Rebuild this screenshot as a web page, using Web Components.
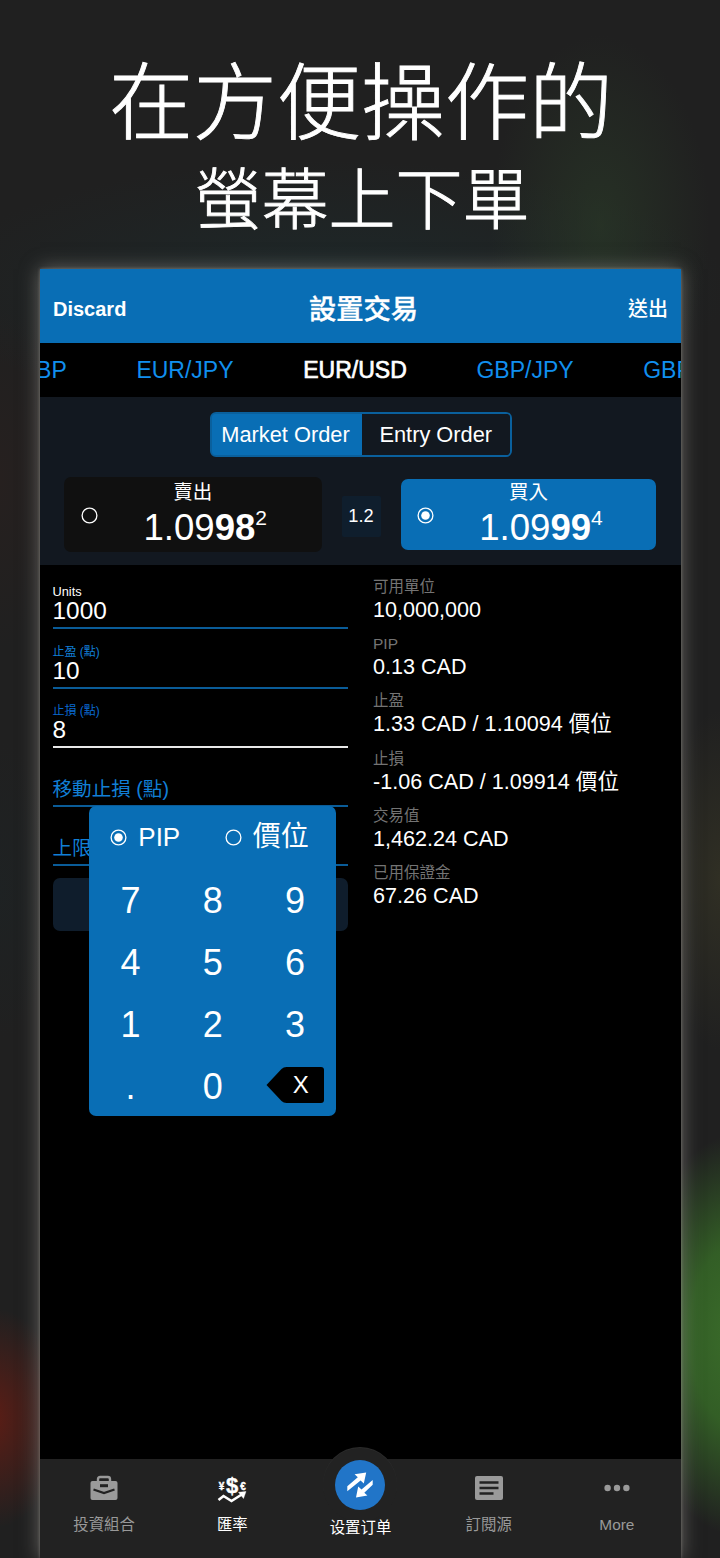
<!DOCTYPE html>
<html lang="zh-Hant">
<head>
<meta charset="utf-8">
<title>設置交易</title>
<style>
    html, body {
        margin: 0;
        height: 1558px;
        overflow: hidden;
    }
    body {
        font-family: "Liberation Sans", "Noto Sans CJK TC", sans-serif;
        color: #fff;
        background:
            radial-gradient(ellipse 100px 200px at 735px 1335px, #3a6c2a 0, #335e26 45%, transparent 100%),
            radial-gradient(ellipse 75px 110px at -8px 1418px, #5c1d15 0, transparent 100%),
            radial-gradient(ellipse 60px 170px at 0 480px, rgba(60, 32, 28, .22) 0, transparent 100%),
            radial-gradient(ellipse 60px 150px at 0 890px, rgba(20, 45, 52, .15) 0, transparent 100%),
            radial-gradient(ellipse 60px 170px at 720px 880px, rgba(64, 62, 40, .5) 0, transparent 100%),
            radial-gradient(ellipse 110px 190px at 600px 225px, rgba(42, 58, 40, .65) 0, transparent 100%),
            radial-gradient(ellipse 400px 130px at 330px 290px, rgba(28, 46, 48, .6) 0, transparent 100%),
            #202020;
    }
</style>
</head>
<body>
<promo-page>
    <promo-title slot="title" style="--size: 84px; --line: 100px; --shift: 2px">在方便操作的</promo-title>
    <promo-title slot="title" style="--size: 67px; --line: 96px; --shift: 4px">螢幕上下單</promo-title>

    <app-header>
        <span slot="left">Discard</span>
        設置交易
        <span slot="right">送出</span>
    </app-header>
    <pair-tabs>
        <span>EUR/GBP</span>
        <span>EUR/JPY</span>
        <span class="on">EUR/USD</span>
        <span>GBP/JPY</span>
        <span>GBP/USD</span>
    </pair-tabs>
    <order-panel>
        <order-switch slot="switch">
            <span class="on">Market Order</span>
            <span>Entry Order</span>
        </order-switch>
        <quote-button label="賣出" price="1.09" pips="98" point="2"></quote-button>
        <spread-box>1.2</spread-box>
        <quote-button label="買入" price="1.09" pips="99" point="4" selected></quote-button>
    </order-panel>
    <order-body>
        <order-field slot="fields" label="Units" value="1000" style="--label: #fff; --label-size: 12.8px"></order-field>
        <order-field slot="fields" label="止盈 (點)" value="10"></order-field>
        <order-field slot="fields" label="止損 (點)" value="8" style="--line: #e8e8e8; --label: #0a6ad0"></order-field>
        <order-field slot="fields" label="移動止損 (點)"></order-field>
        <order-field slot="fields" label="上限"></order-field>
        <num-pad slot="pad"></num-pad>
        <info-item label="可用單位">10,000,000</info-item>
        <info-item label="PIP">0.13 CAD</info-item>
        <info-item label="止盈">1.33 CAD / 1.10094 價位</info-item>
        <info-item label="止損">-1.06 CAD / 1.09914 價位</info-item>
        <info-item label="交易值">1,462.24 CAD</info-item>
        <info-item label="已用保證金">67.26 CAD</info-item>
    </order-body>
    <nav-bar>
        <nav-item icon="case">投資組合</nav-item>
        <nav-item icon="rates" class="on">匯率</nav-item>
        <nav-item icon="trade" class="main" lang="zh-Hans">设置订单</nav-item>
        <nav-item icon="feed">訂閱源</nav-item>
        <nav-item icon="more">More</nav-item>
    </nav-bar>
</promo-page>

<script>
    // Base class: every element only supplies its own markup
    class BaseElement extends HTMLElement {
        constructor() {
            super();
            this.attachShadow({ mode: 'open' });
        }

        connectedCallback() {
            const template = document.createElement('template');
            template.innerHTML = this.template();
            this.shadowRoot.replaceChildren(template.content.cloneNode(true));
        }

        attr(name) {
            return this.getAttribute(name) || '';
        }
    }

    class PromoPage extends BaseElement {
        template() {
            return `
                <style>
                    :host {
                        display: flex;
                        flex-direction: column;
                        height: 1558px;
                    }
                    header {
                        height: 222px;
                        padding-top: 47px;
                    }
                    main {
                        flex: 1;
                        display: flex;
                        flex-direction: column;
                        margin: 0 39px 0 40px;
                        background: #000;
                        box-shadow: 0 0 3px rgba(170, 165, 160, .5), 0 0 18px rgba(170, 165, 160, .55);
                    }
                </style>
                <header><slot name="title"></slot></header>
                <main><slot></slot></main>
            `;
        }
    }

    class PromoTitle extends BaseElement {
        template() {
            return `
                <style>
                    :host {
                        display: block;
                        padding-left: var(--shift, 0);
                        text-align: center;
                        font: 300 var(--size)/var(--line) "Noto Sans CJK TC", sans-serif;
                        -webkit-text-stroke: .9px #fff;
                    }
                </style>
                <slot></slot>
            `;
        }
    }

    class AppHeader extends BaseElement {
        template() {
            return `
                <style>
                    :host {
                        display: grid;
                        grid-template-columns: 1fr auto 1fr;
                        align-items: center;
                        height: 73.5px;
                        padding: 7px 13px 0;
                        box-sizing: border-box;
                        background: #096eb5;
                        font-weight: bold;
                    }
                    .title {
                        font-size: 27.3px;
                        font-weight: 500;
                        line-height: 40px;
                        padding: 2px 0 0 6px;
                        -webkit-text-stroke: .4px #fff;
                    }
                    .side {
                        font-size: 20px;
                        line-height: 40px;
                    }
                    .right {
                        text-align: right;
                        font-weight: 500;
                    }
                </style>
                <div class="side"><slot name="left"></slot></div>
                <div class="title"><slot></slot></div>
                <div class="side right"><slot name="right"></slot></div>
            `;
        }
    }

    class PairTabs extends BaseElement {
        template() {
            return `
                <style>
                    :host {
                        display: flex;
                        justify-content: center;
                        height: 54px;
                        padding-right: 11px;
                        overflow: hidden;
                        font-size: 23px;
                        line-height: 54px;
                        color: #118fee;
                    }
                    ::slotted(span) {
                        flex: 0 0 170px;
                        text-align: center;
                    }
                    ::slotted(.on) {
                        color: #fff;
                        -webkit-text-stroke: .7px #fff;
                    }
                </style>
                <slot></slot>
            `;
        }
    }

    class OrderPanel extends BaseElement {
        template() {
            return `
                <style>
                    :host {
                        display: block;
                        height: 168px;
                        padding-top: 15.5px;
                        box-sizing: border-box;
                        background: #121820;
                    }
                    .quotes {
                        display: flex;
                        align-items: center;
                        justify-content: space-between;
                        height: 75px;
                        margin-top: 20px;
                        padding: 0 25px 0 23.5px;
                    }
                </style>
                <slot name="switch"></slot>
                <div class="quotes"><slot></slot></div>
            `;
        }
    }

    class OrderSwitch extends BaseElement {
        template() {
            return `
                <style>
                    :host {
                        display: flex;
                        width: 301.5px;
                        height: 45px;
                        margin-left: 170px;
                        box-sizing: border-box;
                        border: 2px solid #0a609d;
                        border-radius: 6px;
                        overflow: hidden;
                        background: linear-gradient(90deg, #096eb5 50%, #121820 50%);
                        font-size: 21.8px;
                        line-height: 42px;
                        text-align: center;
                    }
                    ::slotted(span) {
                        flex: 1;
                        background: #121820;
                    }
                    ::slotted(.on) {
                        background: #096eb5;
                        flex: 0 0 150px;
                        text-indent: -3px;
                    }
                </style>
                <slot></slot>
            `;
        }
    }

    class RadioDot extends BaseElement {
        template() {
            return `
                <style>
                    :host {
                        display: block;
                        width: 17px;
                        height: 17px;
                    }
                    svg { display: block; }
                </style>
                <svg width="17" height="17" viewBox="0 0 17 17">
                    <circle cx="8.5" cy="8.5" r="7.4" fill="none" stroke="#fff" stroke-width="1.3"/>
                    ${this.hasAttribute('checked') ? '<circle cx="8.5" cy="8.5" r="4.3" fill="#fff"/>' : ''}
                </svg>
            `;
        }
    }

    class QuoteButton extends BaseElement {
        template() {
            const checked = this.hasAttribute('selected') ? 'checked' : '';
            return `
                <style>
                    :host {
                        display: grid;
                        grid-template-columns: 34px 1fr 34px;
                        align-items: center;
                        width: 258.5px;
                        height: 75px;
                        border-radius: 7px;
                        background: #101010;
                    }
                    :host([selected]) {
                        width: 255px;
                        height: 71px;
                        background: #096eb5;
                    }
                    radio-dot {
                        justify-self: end;
                        margin-top: 1px;
                    }
                    :host([selected]) radio-dot { margin-right: 1px; }
                    .label {
                        text-align: center;
                        font-size: 19.5px;
                        line-height: 28px;
                        margin-top: -2px;
                    }
                    .price {
                        display: flex;
                        justify-content: center;
                        margin-left: 25px;
                        font-size: 36.6px;
                        line-height: 43px;
                    }
                    .price span {
                        font-size: 21px;
                        line-height: 23px;
                    }
                </style>
                <radio-dot ${checked}></radio-dot>
                <div>
                    <div class="label">${this.attr('label')}</div>
                    <div class="price">${this.attr('price')}<b>${this.attr('pips')}</b><span>${this.attr('point')}</span></div>
                </div>
            `;
        }
    }

    class SpreadBox extends BaseElement {
        template() {
            return `
                <style>
                    :host {
                        display: block;
                        width: 39px;
                        margin-left: -1px;
                        background: #0f1e2d;
                        border-radius: 2px;
                        font-size: 18.2px;
                        line-height: 41px;
                        text-align: center;
                        margin-top: 3px;
                    }
                </style>
                <slot></slot>
            `;
        }
    }

    class OrderBody extends BaseElement {
        template() {
            return `
                <style>
                    :host {
                        flex: 1;
                        display: flex;
                        position: relative;
                    }
                    .fields {
                        width: 295.5px;
                        margin: 5.5px 25px 0 12.5px;
                    }
                    .button {
                        height: 53px;
                        margin-top: 12px;
                        border-radius: 7px;
                        background: #0f1d2c;
                    }
                    .info { padding-top: 11.3px; }
                    .pad {
                        position: absolute;
                        left: 49.3px;
                        top: 241.5px;
                    }
                </style>
                <div class="fields">
                    <slot name="fields"></slot>
                    <div class="button"></div>
                </div>
                <div class="info"><slot></slot></div>
                <div class="pad"><slot name="pad"></slot></div>
            `;
        }
    }

    class OrderField extends BaseElement {
        template() {
            const value = this.attr('value');
            return `
                <style>
                    :host {
                        display: flex;
                        flex-direction: column;
                        justify-content: flex-end;
                        height: 59.3px;
                        box-sizing: border-box;
                        border-bottom: 2px solid var(--line, #0a5c98);
                    }
                    .label {
                        font-size: var(--label-size, 12px);
                        line-height: 14px;
                        color: var(--label, #117fd6);
                    }
                    .value {
                        font-size: 24.4px;
                        line-height: 24px;
                        margin-bottom: 4px;
                    }
                    .empty {
                        font-size: 19.6px;
                        line-height: 32px;
                        color: #117fd6;
                    }
                </style>
                ${value
                    ? `<div class="label">${this.attr('label')}</div><div class="value">${value}</div>`
                    : `<div class="empty">${this.attr('label')}</div>`}
            `;
        }
    }

    class InfoItem extends BaseElement {
        template() {
            return `
                <style>
                    :host {
                        display: block;
                        height: 57.3px;
                        font-size: 21.6px;
                        line-height: 26px;
                        white-space: nowrap;
                    }
                    .label {
                        font-size: 15.5px;
                        line-height: 21px;
                        color: #747474;
                    }
                </style>
                <div class="label">${this.attr('label')}</div>
                <slot></slot>
            `;
        }
    }

    class NumPad extends BaseElement {
        template() {
            const keys = ['7', '8', '9', '4', '5', '6', '1', '2', '3', '.', '0'];
            return `
                <style>
                    :host {
                        display: block;
                        width: 247px;
                        height: 310px;
                        border-radius: 7px;
                        background: #096eb5;
                    }
                    .modes {
                        display: flex;
                        align-items: center;
                        height: 62px;
                        padding-left: 21px;
                        font-size: 26px;
                        line-height: 64px;
                    }
                    .modes span {
                        width: 88px;
                        margin-left: 11px;
                    }
                    .modes span + radio-dot { margin-left: 3px; }
                    .modes span + radio-dot + span {
                        font-size: 28px;
                        line-height: 68px;
                    }
                    .keys {
                        display: grid;
                        grid-template-columns: repeat(3, 1fr);
                        grid-auto-rows: 62px;
                        font-size: 36px;
                        line-height: 66px;
                        text-align: center;
                    }
                    .delete {
                        display: grid;
                        align-items: center;
                        justify-content: end;
                        padding: 0 11px 0 0;
                    }
                    .delete svg, .delete span { grid-area: 1 / 1; }
                    .delete span {
                        font-size: 24px;
                        line-height: 62px;
                        padding-left: 11px;
                    }
                </style>
                <div class="modes">
                    <radio-dot checked></radio-dot><span>PIP</span>
                    <radio-dot></radio-dot><span>價位</span>
                </div>
                <div class="keys">
                    ${keys.map(key => `<div>${key}</div>`).join('')}
                    <div class="delete">
                        <svg width="60" height="38" viewBox="0 0 60 38">
                            <path d="M1.5 19 16.5 3q2-2 5-2H56q3 0 3 3V34q0 3-3 3H21.500q-3 0-5-2Z"/>
                        </svg>
                        <span>X</span>
                    </div>
                </div>
            `;
        }
    }

    class NavBar extends BaseElement {
        template() {
            return `
                <style>
                    :host {
                        display: grid;
                        grid-template-columns: repeat(5, 1fr);
                        height: 99px;
                        background: #222;
                    }
                </style>
                <slot></slot>
            `;
        }
    }

    const ICONS = {
        case: `<svg width="28" height="26" viewBox="0 0 28 26" fill="#9a9a9a">
                <path d="M8 7V4.200Q8 2 10.200 2h7.600Q20 2 20 4.200V7" fill="none" stroke="#9a9a9a" stroke-width="2.400"/>
                <path d="M2.500 6h23Q27.500 6 27.500 8v15q0 2-2 2h-23q-2 0-2-2V8q0-2 2-2Z"/>
                <path d="M3.500 14.500 14 18l10.500-3.500" fill="none" stroke="#222" stroke-width="2.200"/>
                <rect x="10" y="9.200" width="8" height="3" fill="#222"/>
            </svg>`,
        rates: `<svg width="30" height="28" viewBox="0 0 30 28" fill="#fff" stroke="#fff" stroke-width=".4" font-family="Liberation Sans" font-weight="bold" text-anchor="middle" overflow="visible">
                <text x="15" y="17.500" font-size="22">$</text>
                <text x="4.500" y="14.500" font-size="10">¥</text>
                <text x="26" y="14.500" font-size="10">€</text>
                <path d="M1.500 25 6.500 21 14.500 26 25.500 19" fill="none" stroke-width="2.600"/>
                <path d="M21.500 17.300 29 16.500 26.500 23.500Z"/>
            </svg>`,
        trade: `<svg width="50" height="50" viewBox="0 0 50 50">
                <circle cx="25" cy="25" r="25" fill="#2175c8"/>
                <path d="M31.200 12.500 19.600 14.300 22.800 17.200 12.300 26.300V31.200L25.600 20.500 28.800 23.500ZM21 37.500 32.400 35.500 29.300 32.700 37.700 24.800V20L26.500 29.600 23.200 26.600Z" fill="#fff"/>
            </svg>`,
        feed: `<svg width="30" height="26" viewBox="0 0 30 26">
                <rect x="1" y="1" width="28" height="24" rx="2" fill="#9a9a9a"/>
                <path d="M5.500 7.500h19M5.500 13h19M5.500 18.500h14" stroke="#222" stroke-width="2.400"/>
            </svg>`,
        more: `<svg width="28" height="26" viewBox="0 0 28 26" fill="#9a9a9a">
                <circle cx="4.600" cy="13" r="3.200"/><circle cx="14" cy="13" r="3.200"/><circle cx="23.400" cy="13" r="3.200"/>
            </svg>`,
    };

    class NavItem extends BaseElement {
        template() {
            return `
                <style>
                    :host {
                        display: flex;
                        flex-direction: column;
                        align-items: center;
                        font-size: 15.4px;
                        line-height: 24px;
                        color: #999;
                    }
                    :host(.on), :host(.main) { color: #fff; }
                    .icon {
                        display: grid;
                        place-items: center;
                        height: 26px;
                        margin: 16px 0 12px;
                    }
                    /* round bump that rises above the bar */
                    :host(.main) .icon {
                        width: 74px;
                        height: 74px;
                        margin: -11px 0 -8px;
                        border-radius: 50%;
                        background: #222;
                        box-shadow: 0 -1px 0 #2b2b2b;
                    }
                    :host(.main) .label {
                        font-family: "Noto Sans CJK SC", sans-serif;
                    }
                    svg { display: block; }
                </style>
                <div class="icon">${ICONS[this.attr('icon')]}</div>
                <div class="label"><slot></slot></div>
            `;
        }
    }

    customElements.define('promo-page', PromoPage);
    customElements.define('promo-title', PromoTitle);
    customElements.define('app-header', AppHeader);
    customElements.define('pair-tabs', PairTabs);
    customElements.define('order-panel', OrderPanel);
    customElements.define('order-switch', OrderSwitch);
    customElements.define('radio-dot', RadioDot);
    customElements.define('quote-button', QuoteButton);
    customElements.define('spread-box', SpreadBox);
    customElements.define('order-body', OrderBody);
    customElements.define('order-field', OrderField);
    customElements.define('info-item', InfoItem);
    customElements.define('num-pad', NumPad);
    customElements.define('nav-bar', NavBar);
    customElements.define('nav-item', NavItem);
</script>
</body>
</html>
